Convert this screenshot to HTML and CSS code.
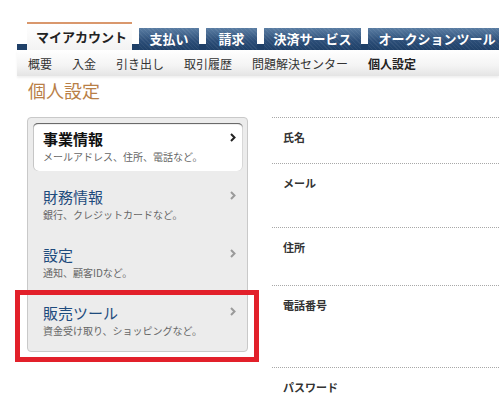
FILE: index.html
```html
<!DOCTYPE html>
<html lang="ja">
<head>
  <meta charset="UTF-8" />
  <meta name="viewport" content="width=device-width, initial-scale=1.0"/>
  <title>個人設定</title>
  <link rel="stylesheet" href="styles.css">
</head>
<body>
  <div class="header">
    <ul class="tabs">
      <li class="tab active">マイアカウント</li>
      <li class="tab tab-pay">支払い</li>
      <li class="tab tab-bill">請求</li>
      <li class="tab tab-service">決済サービス</li>
      <li class="tab tab-auction">オークションツール</li>
    </ul>
    <ul class="subnav">
      <li>概要</li>
      <li>入金</li>
      <li>引き出し</li>
      <li>取引履歴</li>
      <li>問題解決センター</li>
      <li class="current">個人設定</li>
    </ul>
  </div>

  <h1 class="page-title">個人設定</h1>

  <div class="content">
    <div class="side-menu">
      <a class="menu-item current" href="#">
        <span class="menu-title">事業情報</span>
        <span class="menu-desc">メールアドレス、住所、電話など。</span>
        <svg class="chevron" width="6" height="9" viewBox="0 0 6 9"><polyline points="1,1 4.5,4.5 1,8" fill="none" stroke="#222" stroke-width="2"/></svg>
      </a>
      <a class="menu-item" href="#">
        <span class="menu-title">財務情報</span>
        <span class="menu-desc">銀行、クレジットカードなど。</span>
        <svg class="chevron" width="6" height="9" viewBox="0 0 6 9"><polyline points="1,1 4.5,4.5 1,8" fill="none" stroke="#9a9a9a" stroke-width="2"/></svg>
      </a>
      <a class="menu-item" href="#">
        <span class="menu-title">設定</span>
        <span class="menu-desc">通知、顧客IDなど。</span>
        <svg class="chevron" width="6" height="9" viewBox="0 0 6 9"><polyline points="1,1 4.5,4.5 1,8" fill="none" stroke="#9a9a9a" stroke-width="2"/></svg>
      </a>
      <a class="menu-item" href="#">
        <span class="menu-title">販売ツール</span>
        <span class="menu-desc">資金受け取り、ショッピングなど。</span>
        <svg class="chevron" width="6" height="9" viewBox="0 0 6 9"><polyline points="1,1 4.5,4.5 1,8" fill="none" stroke="#9a9a9a" stroke-width="2"/></svg>
        <span class="highlight"></span>
      </a>
    </div>

    <div class="fields">
      <div class="field field-name"><span class="field-label">氏名</span></div>
      <div class="field field-mail"><span class="field-label">メール</span></div>
      <div class="field field-address"><span class="field-label">住所</span></div>
      <div class="field field-phone"><span class="field-label">電話番号</span></div>
      <div class="field field-password"><span class="field-label">パスワード</span></div>
    </div>
  </div>
</body>
</html>
```

FILE: styles.css
```css
html, body {
  overflow: hidden;
}
body {
  margin: 0;
  font-family: "Noto Sans CJK JP", "Liberation Sans", sans-serif;
  background: #fff;
  color: #333;
}
ul {
  list-style: none;
  margin: 0;
  padding: 0;
}

/* top tabs */
.tabs {
  display: flex;
  margin: 22px 0 0 17px;
  padding-left: 10px;
  height: 28px;
  background: linear-gradient(to bottom, transparent 22px, #1f4068 22px);
  white-space: nowrap;
}
.tab {
  flex: none;
  margin: 6px 0 0 7px;
  height: 22px;
  line-height: 21px;
  text-align: center;
  font-size: 13px;
  font-weight: bold;
  color: #fff;
  background:
    repeating-linear-gradient(45deg, rgba(255,255,255,0.06) 0 1px, transparent 1px 3px),
    linear-gradient(to bottom, #5a7da3, #2b4d77 60%, #1f4068);
}
.tab.active {
  margin: 0;
  width: 105px;
  height: 28px;
  box-sizing: border-box;
  padding-left: 4px;
  line-height: 25px;
  border-top: 2px solid #d9976c;
  color: #222;
  background: linear-gradient(to bottom, #fff, #f3f3f3);
}
.tab-pay { width: 60px; }
.tab-bill { width: 51px; }
.tab-service { width: 97px; }
.tab-auction { width: 138px; }

/* sub navigation */
.subnav {
  display: flex;
  align-items: center;
  gap: 20px;
  margin-left: 17px;
  padding-left: 11px;
  height: 26px;
  font-size: 12px;
  color: #333;
  background: linear-gradient(to bottom, #fff, #f4f4f4 60%, #e4e4e4);
  box-shadow: 0 2px 2px rgba(0,0,0,0.06);
}
.subnav .current {
  font-weight: bold;
  color: #222;
}

.page-title {
  margin: 2px 0 0 28px;
  font-size: 18px;
  line-height: 24px;
  font-weight: normal;
  color: #b97f47;
}

/* main area */
.content {
  display: flex;
  margin-top: 15px;
  padding-left: 27px;
}
.side-menu {
  flex: none;
  width: 221px;
  box-sizing: border-box;
  padding: 5px 4px 6px 5px;
  border: 1px solid #c9c9c9;
  border-radius: 4px;
  background: #ececec;
  align-self: flex-start;
}
.menu-item {
  position: relative;
  display: block;
  height: 48px;
  box-sizing: border-box;
  padding: 6px 10px;
  margin-bottom: 10px;
  text-decoration: none;
  border-radius: 5px;
}
.menu-item:last-child {
  margin-bottom: 0;
}
.menu-item.current {
  background: #fff;
  box-shadow: inset 0 2px 1px -1px #5a5a5a, inset 1px 0 0 #c6c6c6, inset -1px 0 0 #d8d8d8;
}
.menu-title {
  display: block;
  font-size: 15px;
  line-height: 19px;
  color: #1e4b7d;
}
.current .menu-title {
  font-weight: bold;
  color: #111;
}
.menu-desc {
  display: block;
  margin-top: 2px;
  font-size: 10px;
  line-height: 14px;
  color: #666;
}
.chevron {
  position: absolute;
  right: 7px;
  top: 10px;
}
.highlight {
  position: absolute;
  left: -18px;
  top: -7px;
  width: 244px;
  height: 72px;
  box-sizing: border-box;
  border: 5px solid #e2202a;
}

/* right column */
.fields {
  flex: 1;
  margin-left: 24px;
}
.field {
  box-sizing: border-box;
  padding: 12px 0 0 11px;
  border-top: 1px dotted #a8a8a8;
}
.field-name { height: 46px; }
.field-mail { height: 64px; }
.field-address { height: 58px; }
.field-phone { height: 82px; }
.field-password { height: 34px; }
.field-label {
  display: block;
  font-size: 11px;
  line-height: 14px;
  font-weight: bold;
  color: #333;
}
```
